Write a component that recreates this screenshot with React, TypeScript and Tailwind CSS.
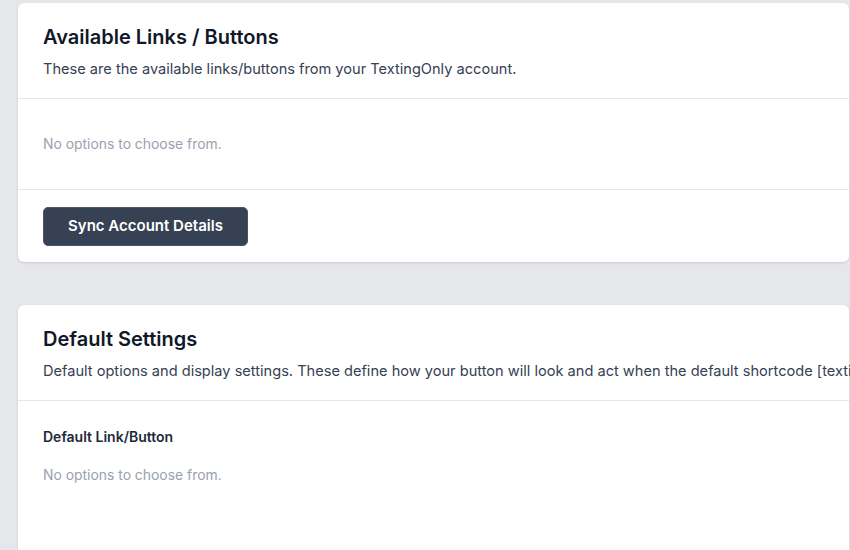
import React from 'react';

function CardHeader({ title, subtitle }: { title: string; subtitle: string }) {
  return (
    <div className="border-b border-gray-200 px-[25px] pt-[20px] pb-[19px]">
      <h2 className="text-[20px] leading-[28px] font-semibold text-gray-900">{title}</h2>
      <p className="mt-2 text-[14.6px] leading-5 text-gray-700 whitespace-nowrap">{subtitle}</p>
    </div>
  );
}

export default function App() {
  return (
    <div
      className="h-[550px] w-[850px] overflow-hidden bg-[#e5e7eb] pt-[3px] pl-[18px]"
      style={{ fontFamily: 'Inter, "Noto Sans", sans-serif' }}
    >
      <div className="w-[831px] rounded-md bg-white shadow-sm">
        <CardHeader
          title="Available Links / Buttons"
          subtitle="These are the available links/buttons from your TextingOnly account."
        />
        <div className="border-b border-gray-200 px-[25px] pt-[35px] pb-[35px]">
          <p className="text-[13.9px] leading-5 text-gray-400">No options to choose from.</p>
        </div>
        <div className="px-[25px] pt-[17px] pb-[16px]">
          <button className="h-[39px] w-[205px] rounded-[5px] border border-gray-600 bg-gray-700 text-[15px] font-semibold text-white">
            Sync Account Details
          </button>
        </div>
      </div>

      <div className="mt-[43px] h-[300px] w-[831px] rounded-md bg-white shadow-sm">
        <CardHeader
          title="Default Settings"
          subtitle="Default options and display settings. These define how your button will look and act when the default shortcode [textingonly] is used."
        />
        <div className="px-[25px] pt-[26px]">
          <p className="text-[14px] leading-5 font-semibold text-gray-800">Default Link/Button</p>
          <p className="mt-[18px] text-[13.9px] leading-5 text-gray-400">No options to choose from.</p>
        </div>
      </div>
    </div>
  );
}
